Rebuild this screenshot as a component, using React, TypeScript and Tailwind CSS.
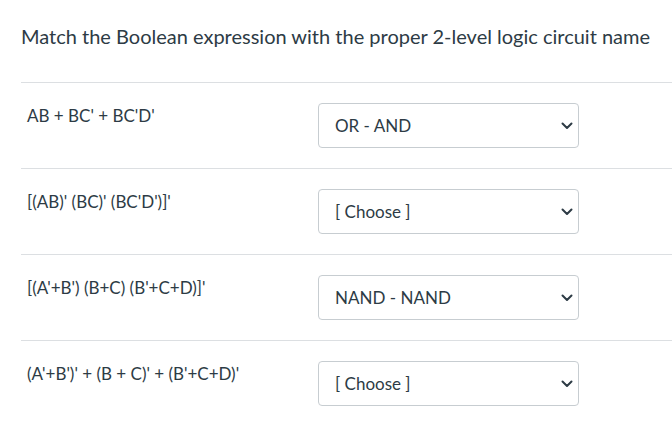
const rows = [
  { expr: "AB + BC' + BC'D'", value: 'OR - AND' },
  { expr: "[(AB)' (BC)' (BC'D')]'", value: '[ Choose ]' },
  { expr: "[(A'+B') (B+C) (B'+C+D)]'", value: 'NAND - NAND' },
  { expr: "(A'+B')' + (B + C)' + (B'+C+D)'", value: '[ Choose ]' },
]

const Chevron = () => (
  <svg width="12" height="8" viewBox="0 0 12 8" className="shrink-0">
    <path d="M1.5 1.5 L6 6 L10.5 1.5" fill="none" stroke="#2d3b45" strokeWidth="2" strokeLinecap="round" strokeLinejoin="round" />
  </svg>
)

export default function App() {
  return (
    <div className="w-[672px] h-[432px] overflow-hidden bg-white pl-[21px] text-[#2d3b45]" style={{ fontFamily: 'Lato, "Noto Sans", sans-serif' }}>
      <div className="h-[82px] flex items-center pb-[10px]">
        <p className="text-[20px] leading-none">Match the Boolean expression with the proper 2-level logic circuit name</p>
      </div>
      {rows.map((row, i) => (
        <div key={i} className="h-[86px] border-t border-[#dcdfe2] flex items-start pt-5">
          <div className="w-[297px] pl-[6px] text-[17px] leading-[25px]">{row.expr}</div>
          <div className="w-[261px] h-[45px] border border-[#c7cdd1] rounded-[4px] flex items-center justify-between pl-4 pr-[5px] text-[17px]">
            <span>{row.value}</span>
            <Chevron />
          </div>
        </div>
      ))}
    </div>
  )
}
